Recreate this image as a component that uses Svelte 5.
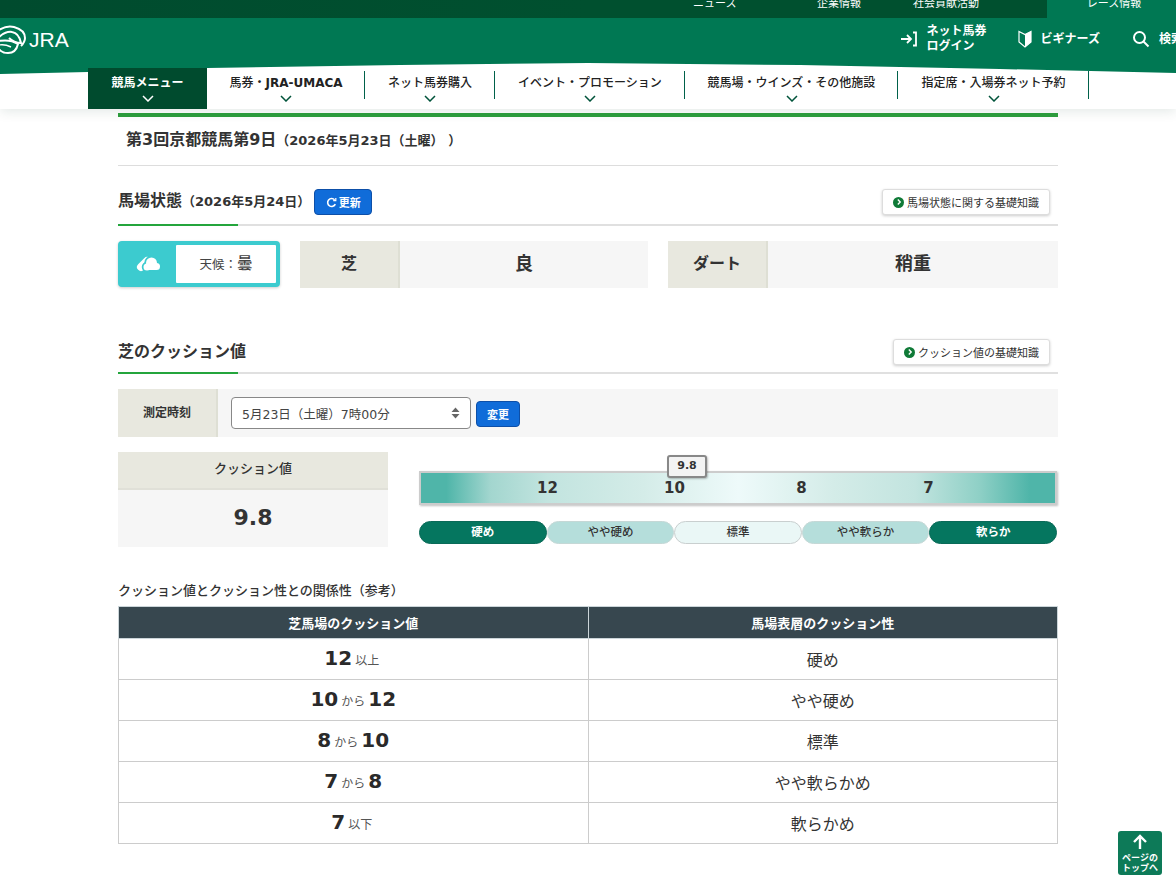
<script>
  const topLinks = ['ニュース', '企業情報', '社会貢献活動'];
  const navItems = [
    { label: '競馬メニュー', w: 119, active: true },
    { label: '馬券・', bold: 'JRA-UMACA', w: 158 },
    { label: 'ネット馬券購入', w: 130 },
    { label: 'イベント・プロモーション', w: 190 },
    { label: '競馬場・ウインズ・その他施設', w: 213 },
    { label: '指定席・入場券ネット予約', w: 191 }
  ];
  const pills = [
    { t: '硬め', c: 'dark' },
    { t: 'やや硬め', c: 'mid' },
    { t: '標準', c: 'light' },
    { t: 'やや軟らか', c: 'mid' },
    { t: '軟らか', c: 'dark' }
  ];
  const rows = [
    { a: '12', m: '以上', b: '', r: '硬め' },
    { a: '10', m: 'から', b: '12', r: 'やや硬め' },
    { a: '8', m: 'から', b: '10', r: '標準' },
    { a: '7', m: 'から', b: '8', r: 'やや軟らかめ' },
    { a: '7', m: '以下', b: '', r: '軟らかめ' }
  ];
</script>

<header class="header">
  <div class="topbar">
    {#each topLinks as l, i}
      <span class="toplink t{i}">{l}</span>
    {/each}
    <span class="toplink current">レース情報</span>
  </div>
  <div class="brand">
    <div class="logo">
      <svg width="28" height="32" viewBox="0 0 28 32" fill="none" stroke="#fff" stroke-width="2">
        <path d="M-1 6Q7 1 14 3Q25 6 25 14Q25 18 21 22" />
        <path d="M-1 13Q6 7 12 8Q19 9 21 19Q14 19 9 14" stroke-width="2" />
        <path d="M-1 17Q10 15 18 20Q16 29 8 29Q2 29 -1 25" stroke-width="2" />
        <path d="M-1 21Q5 20 11 23" stroke-width="1.4" />
      </svg>
      <span class="jra">JRA</span>
    </div>
    <div class="tools">
      <div class="tool login">
        <svg width="18" height="16" viewBox="0 0 18 16" fill="none" stroke="#fff" stroke-width="1.8">
          <path d="M1 8H10M7 4l4 4-4 4" />
          <path d="M13 1.5h3v13h-3" />
        </svg>
        <span>ネット馬券<br />ログイン</span>
      </div>
      <div class="tool beginner">
        <svg width="14" height="18" viewBox="0 0 14 18">
          <path d="M1 1.5l6 3 6-3V12l-6 5-6-5z" fill="none" stroke="#fff" stroke-width="1.2" />
          <path d="M7 4.5l6-3V12l-6 5z" fill="#fff" />
        </svg>
        <span>ビギナーズ</span>
      </div>
      <div class="tool search">
        <svg width="18" height="18" viewBox="0 0 18 18" fill="none" stroke="#fff" stroke-width="2">
          <circle cx="7.5" cy="7.5" r="5.5" />
          <path d="M11.5 11.5L16.5 16.5" />
        </svg>
        <span>検索</span>
      </div>
    </div>
  </div>
  <nav class="nav">
    {#each navItems as n}
      <div class="navitem" class:active={n.active} style="width:{n.w}px">
        <span>{n.label}{#if n.bold}<b>{n.bold}</b>{/if}</span>
        <svg width="12" height="7" viewBox="0 0 12 7" fill="none" stroke="currentColor" stroke-width="1.5"><path d="M1 1l5 5 5-5" /></svg>
      </div>
    {/each}
  </nav>
</header>

<main class="content">
  <h1 class="title">第3回京都競馬第9日<small>（2026年5月23日（土曜） ）</small></h1>

  <section class="sec-head first">
    <h2>馬場状態<small>（2026年5月24日）</small></h2>
    <button class="blue refresh">
      <svg width="11" height="11" viewBox="0 0 11 11" fill="none" stroke="#fff" stroke-width="1.6"><path d="M9.3 7.2A4 4 0 1 1 8.6 2.8" /><path d="M9.8 1v2.6H7.2" stroke-width="1.2" /></svg>
      更新
    </button>
    <button class="guide">
      <i><svg width="6" height="6" viewBox="0 0 6 6" fill="none" stroke="#fff" stroke-width="1.4"><path d="M1.8 .6L4.2 3 1.8 5.4" /></svg></i>馬場状態に関する基礎知識
    </button>
  </section>

  <div class="status">
    <div class="weather">
      <div class="wicon">
        <svg width="26" height="18" viewBox="0 0 26 18" fill="#fff">
          <path d="M5 12L11 6" stroke="#fff" stroke-width="8" stroke-linecap="round" />
          <g stroke="#3ccbcf" stroke-width="3.5">
            <circle cx="15.5" cy="8" r="5.5" />
            <circle cx="20.5" cy="11.5" r="3.5" />
            <circle cx="11" cy="12" r="3.5" />
          </g>
          <circle cx="15.5" cy="8" r="5.5" />
          <circle cx="20.5" cy="11.5" r="3.5" />
          <circle cx="11" cy="12" r="3.5" />
          <rect x="11" y="9" width="9.5" height="6" />
        </svg>
      </div>
      <div class="wtext">天候：<b>曇</b></div>
    </div>
    <div class="track turf">
      <div class="tname">芝</div>
      <div class="tval">良</div>
    </div>
    <div class="track dirt">
      <div class="tname">ダート</div>
      <div class="tval">稍重</div>
    </div>
  </div>

  <section class="sec-head second">
    <h2>芝のクッション値</h2>
    <button class="guide">
      <i><svg width="6" height="6" viewBox="0 0 6 6" fill="none" stroke="#fff" stroke-width="1.4"><path d="M1.8 .6L4.2 3 1.8 5.4" /></svg></i>クッション値の基礎知識
    </button>
  </section>

  <div class="measure">
    <div class="mlabel">測定時刻</div>
    <div class="mbody">
      <div class="select">
        <span>5月23日（土曜）7時00分</span>
        <svg width="9" height="12" viewBox="0 0 9 12" fill="#666"><path d="M4.5 .5L8.5 5H.5zM4.5 11.5L.5 7h8z" /></svg>
      </div>
      <button class="blue change">変更</button>
    </div>
  </div>

  <div class="cushion">
    <div class="cbox">
      <div class="chead">クッション値</div>
      <div class="cval">9.8</div>
    </div>
    <div class="gaugewrap">
      <div class="gauge">
        <div class="marker">9.8</div>
        <span>12</span><span>10</span><span>8</span><span>7</span>
      </div>
      <div class="pills">
        {#each pills as p}
          <div class="pill {p.c}">{p.t}</div>
        {/each}
      </div>
    </div>
  </div>

  <h3 class="caption">クッション値とクッション性との関係性（参考）</h3>
  <table>
    <thead>
      <tr><th>芝馬場のクッション値</th><th>馬場表層のクッション性</th></tr>
    </thead>
    <tbody>
      {#each rows as r}
        <tr>
          <td><b>{r.a}</b><small>{r.m}</small>{#if r.b}<b>{r.b}</b>{/if}</td>
          <td class="right">{r.r}</td>
        </tr>
      {/each}
    </tbody>
  </table>
</main>

<div class="pagetop">
  <svg width="16" height="16" viewBox="0 0 16 16" fill="none" stroke="#fff" stroke-width="2.4"><path d="M8 15V2M2 8l6-6 6 6" /></svg>
  <span>ページの<br />トップへ</span>
</div>

<style>
  :global(body) {
    margin: 0;
    background: #fff;
    color: #333;
    font-family: "DejaVu Sans", "Noto Sans CJK JP", sans-serif;
    overflow: hidden;
  }
  .header {
    position: relative;
    box-shadow: 0 2px 12px rgba(0, 60, 40, 0.12);
    background: #fff;
  }
  .topbar {
    height: 18px;
    position: relative;
    display: flex;
    justify-content: flex-end;
    overflow: hidden;
    background: linear-gradient(90deg, #004b2e, #00502f 50%, #00502f);
  }
  .toplink {
    position: absolute;
    top: -5px;
    color: #fff;
    font-size: 11px;
    line-height: 18px;
  }
  .t0 { left: 693px; }
  .t1 { left: 817px; }
  .t2 { left: 913px; }
  .current {
    left: 1047px;
    right: 0;
    top: 0;
    height: 18px;
    line-height: 8px;
    text-align: center;
    background: #007853;
    padding-left: 5px;
  }
  .brand {
    position: relative;
    z-index: 1;
    height: 58px;
    margin-bottom: -8px;
    background: #007853;
    display: flex;
    align-items: flex-start;
    justify-content: space-between;
    clip-path: polygon(0 0, 100% 0, 100% 55px, 1000px 51px, 800px 47px, 588px 45px, 400px 47px, 207px 50px, 88px 54px, 0 56px);
  }
  .logo {
    display: flex;
    align-items: center;
    height: 32px;
    margin-top: 6px;
  }
  .jra {
    color: #fff;
    font-family: "Liberation Sans", sans-serif;
    font-size: 21px;
    margin-left: 1px;
  }
  .tools {
    display: flex;
    align-items: center;
    height: 42px;
    margin-right: -7px;
  }
  .tool {
    display: flex;
    align-items: center;
    color: #fff;
    font-size: 12px;
    font-weight: 700;
    line-height: 15px;
    gap: 9px;
  }
  .login { margin-right: 31px; }
  .beginner { margin-right: 32px; gap: 9px; }
  .nav {
    position: relative;
    height: 41px;
    display: flex;
    padding-left: 88px;
    background: #fff;
  }
  .navitem {
    position: relative;
    box-sizing: border-box;
    display: flex;
    flex-direction: column;
    align-items: center;
    justify-content: flex-start;
    padding-top: 6px;
    height: 41px;
    font-size: 12px;
    font-weight: 500;
    line-height: 18px;
    color: #222;
  }
  .navitem svg { color: #00533a; margin-top: 3px; }
  .navitem:not(.active)::after {
    content: "";
    position: absolute;
    right: 0;
    top: 3px;
    height: 28px;
    width: 1px;
    background: #00614a;
  }
  .navitem.active {
    z-index: 2;
    background: #004b2e;
    color: #fff;
    font-weight: 700;
  }
  .navitem.active svg { color: #fff; }
  .content {
    box-sizing: border-box;
    width: 940px;
    margin: 4px 0 0 118px;
    position: relative;
  }
  .title {
    margin: 0;
    box-sizing: border-box;
    height: 53px;
    border-top: 4px solid #2c9b3c;
    border-bottom: 1px solid #ddd;
    padding-left: 8px;
    font-size: 16px;
    font-weight: 700;
    line-height: 46px;
    color: #333;
  }
  .title small { font-size: 13px; font-weight: 700; }
  .sec-head {
    position: relative;
    display: flex;
    align-items: center;
    box-sizing: border-box;
    border-bottom: 2px solid #e0e0e0;
    padding-right: 8px;
  }
  .sec-head::after {
    content: "";
    position: absolute;
    left: 0;
    bottom: -2px;
    width: 120px;
    height: 2px;
    background: #24a53c;
  }
  .first { margin-top: 23px; height: 37px; padding-bottom: 9px; }
  .first h2 { margin-bottom: 6px; }
  .second { margin-top: 51px; height: 35px; padding-bottom: 7px; }
  .second h2 { margin-bottom: 4px; }
  h2 {
    margin: 0;
    font-size: 16px;
    font-weight: 700;
    color: #333;
  }
  h2 small { font-size: 13px; font-weight: 700; }
  .blue {
    font-family: inherit;
    background: #106cd9;
    border: 1px solid #0d4fa8;
    border-radius: 4px;
    color: #fff;
    font-size: 11px;
    font-weight: 700;
    padding: 0;
    display: flex;
    align-items: center;
    justify-content: center;
  }
  .refresh { margin-left: 4px; width: 58px; height: 26px; gap: 2px; }
  .guide {
    margin-left: auto;
    height: 26px;
    background: #fff;
    border: 1px solid #ddd;
    border-radius: 3px;
    box-shadow: 0 1px 3px rgba(0, 0, 0, 0.2);
    font-family: inherit;
    color: #333;
    font-size: 11px;
    padding: 0 10px;
    display: flex;
    align-items: center;
    gap: 3px;
  }
  .guide i {
    width: 11px;
    height: 11px;
    border-radius: 50%;
    background: #0f7a37;
    display: flex;
    align-items: center;
    justify-content: center;
  }
  .status {
    display: flex;
    margin-top: 15px;
    height: 47px;
  }
  .weather {
    box-sizing: border-box;
    width: 162px;
    height: 46px;
    border: 4px solid #3ccbcf;
    border-radius: 4px;
    background: #3ccbcf;
    display: flex;
    box-shadow: 0 1px 3px rgba(0, 0, 0, 0.2);
    margin-right: 20px;
  }
  .wicon {
    width: 54px;
    display: flex;
    align-items: center;
    justify-content: center;
  }
  .wtext {
    flex: 1;
    background: #fff;
    border-radius: 1px;
    text-align: center;
    font-size: 12.5px;
    line-height: 38px;
    color: #444;
  }
  .wtext b { font-size: 15.5px; font-weight: 500; }
  .track { display: flex; }
  .turf { width: 348px; margin-right: 20px; }
  .dirt { flex: 1; }
  .tname {
    box-sizing: border-box;
    width: 100px;
    background: #e8e8df;
    border-right: 2px solid #dedfd4;
    text-align: center;
    font-size: 16px;
    font-weight: 700;
    line-height: 45px;
  }
  .tval {
    flex: 1;
    background: #f6f6f6;
    text-align: center;
    font-size: 18px;
    font-weight: 700;
    line-height: 45px;
    color: #333;
  }
  .measure {
    display: flex;
    margin-top: 15px;
    height: 48px;
    background: #f6f6f6;
  }
  .mlabel {
    box-sizing: border-box;
    width: 100px;
    background: #e8e8df;
    border-right: 2px solid #dedfd4;
    text-align: center;
    font-size: 12px;
    font-weight: 700;
    line-height: 48px;
  }
  .mbody {
    display: flex;
    align-items: center;
    padding-left: 13px;
    gap: 5px;
  }
  .select {
    box-sizing: border-box;
    width: 240px;
    height: 32px;
    background: #fff;
    border: 1px solid #888;
    border-radius: 4px;
    display: flex;
    align-items: center;
    justify-content: space-between;
    padding: 0 10px;
    font-size: 12.5px;
    color: #444;
  }
  .change { width: 44px; height: 26px; margin-top: 2px; }
  .cushion {
    display: flex;
    margin-top: 15px;
    height: 95px;
  }
  .cbox { width: 270px; }
  .chead {
    height: 38px;
    box-sizing: border-box;
    background: #e8e8df;
    border-bottom: 2px solid #e0e0d8;
    text-align: center;
    font-size: 13px;
    font-weight: 500;
    line-height: 33px;
  }
  .cval {
    height: 57px;
    background: #f6f6f6;
    text-align: center;
    font-size: 22px;
    font-weight: 700;
    line-height: 56px;
  }
  .gaugewrap {
    margin-left: 31px;
    width: 638px;
    padding-top: 19px;
  }
  .gauge {
    position: relative;
    box-sizing: border-box;
    height: 34px;
    padding: 0 63px;
    display: flex;
    border: 2px solid #ccc;
    background: linear-gradient(90deg, #4fb5a9 0, #4fb5a9 4%, #a3d6cf 11%, #c2e4df 20%, #d4ece8 35%, #eefafa 50%, #d4ece8 65%, #c2e4df 78%, #8fd0c6 88%, #4fb5a9 96%, #4fb5a9 100%);
    box-shadow: 1px 1px 2px rgba(0, 0, 0, 0.25);
  }
  .gauge span {
    flex: 1;
    text-align: center;
    font-size: 15px;
    font-weight: 700;
    line-height: 30px;
    color: #333;
  }
  .marker {
    position: absolute;
    left: 246px;
    top: -18px;
    width: 40px;
    height: 23px;
    box-sizing: border-box;
    border: 2px solid #888;
    border-radius: 3px;
    background: #f3f3f3;
    text-align: center;
    font-size: 11px;
    font-weight: 700;
    line-height: 18px;
    color: #333;
    box-shadow: 1px 1px 2px rgba(0, 0, 0, 0.25);
    z-index: 1;
  }
  .pills {
    display: flex;
    margin-top: 16px;
  }
  .pill {
    flex: 1;
    box-sizing: border-box;
    height: 23px;
    border-radius: 12px;
    border: 1px solid #ccc;
    text-align: center;
    font-size: 11.5px;
    line-height: 20px;
    font-weight: 500;
    color: #333;
  }
  .dark { background: #05765f; border-color: #0a6a58; color: #fff; font-weight: 700; }
  .mid { background: #b5dedb; border-color: #c5d8d6; }
  .light { background: #eaf7f6; border-color: #c9cfcf; }
  .caption {
    margin: 35px 0 0;
    font-size: 13px;
    font-weight: 500;
    line-height: 18px;
    color: #333;
  }
  table {
    margin-top: 6px;
    width: 940px;
    table-layout: fixed;
    border-collapse: collapse;
  }
  th {
    height: 31px;
    padding: 0;
    background: #37474f;
    border: 1px solid #cbd5d9;
    color: #fff;
    font-size: 13px;
    font-weight: 700;
  }
  td {
    box-sizing: border-box;
    height: 41px;
    padding: 0 0 3px;
    border: 1px solid #ccc;
    text-align: center;
    font-size: 12px;
    color: #555;
  }
  td b {
    font-size: 20px;
    font-weight: 700;
    color: #2a2a2a;
  }
  td small { font-size: 12px; margin: 0 3px; }
  td.right { font-size: 16px; color: #333; padding-bottom: 1px; }
  .pagetop {
    position: fixed;
    left: 1118px;
    top: 831px;
    width: 44px;
    height: 44px;
    background: #0d7a58;
    border-radius: 3px;
    color: #fff;
    font-size: 9px;
    font-weight: 700;
    line-height: 10px;
    text-align: center;
    display: flex;
    flex-direction: column;
    align-items: center;
    padding-top: 3px;
    box-sizing: border-box;
  }
  .pagetop span { margin-top: 3px; white-space: nowrap; }
</style>
